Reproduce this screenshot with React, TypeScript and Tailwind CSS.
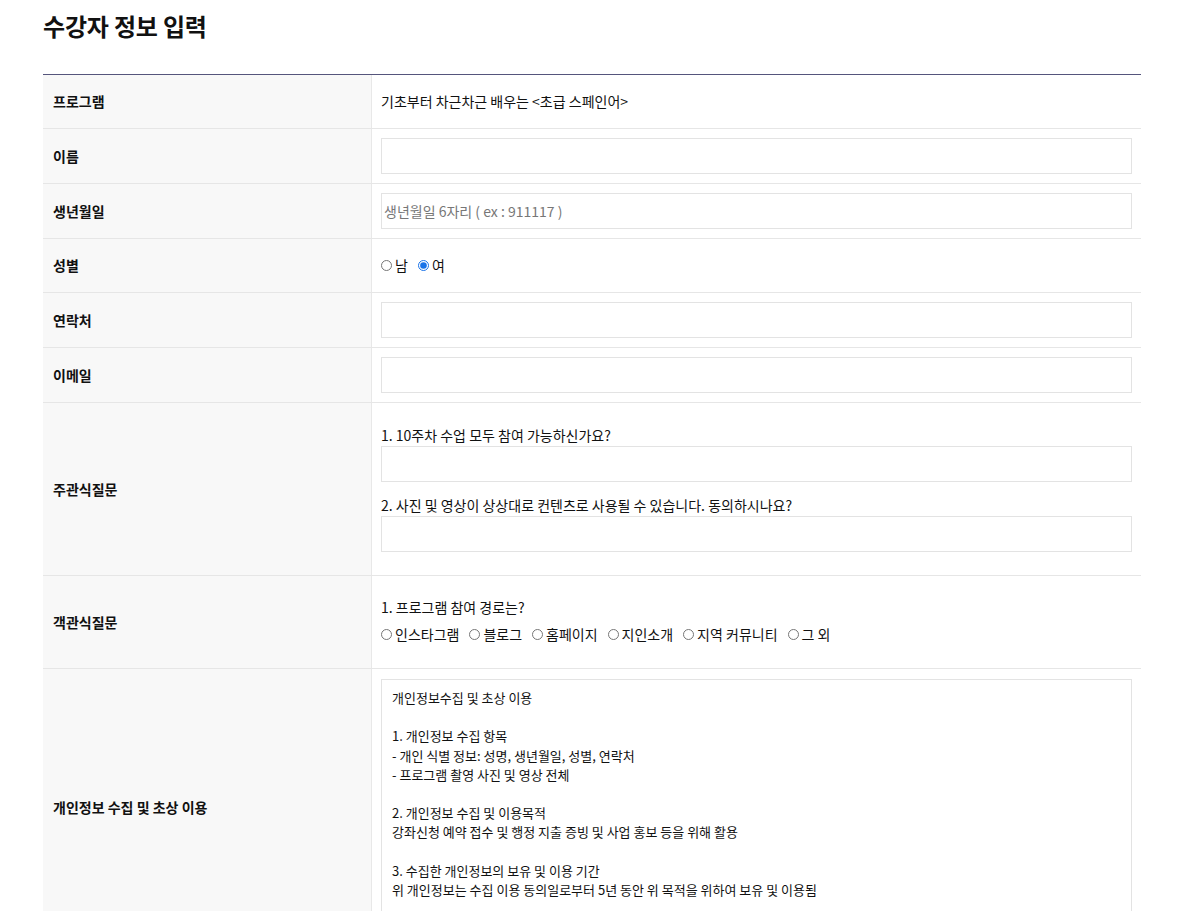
import React from 'react';

const font = { fontFamily: '"Malgun Gothic", "Noto Sans CJK KR", "Noto Sans", sans-serif' };

const Row: React.FC<{ label: string; children: React.ReactNode; className?: string }> = ({
  label,
  children,
  className = '',
}) => (
  <div className="flex border-b border-[#e6e6e6]">
    <div className="w-[328px] shrink-0 bg-[#f8f8f8] pl-[10px] flex items-center text-[14px] font-bold text-[#111]">
      {label}
    </div>
    <div className={`flex-1 border-l border-[#e8e8e8] px-[9px] ${className}`}>{children}</div>
  </div>
);

const TextInput: React.FC<{ placeholder?: string }> = ({ placeholder }) => (
  <input
    type="text"
    placeholder={placeholder}
    className="block w-full h-[36px] border border-[#e3e3e3] bg-white px-[2px] text-[14px] text-[#111] placeholder:text-[#777] outline-none"
  />
);

const Radio: React.FC<{ name: string; label: string; checked?: boolean }> = ({ name, label, checked }) => (
  <label className="flex items-center mr-[10px]">
    <input
      type="radio"
      name={name}
      defaultChecked={checked}
      className="w-[11px] h-[11px] m-0 mr-[3px] accent-[#1a73e8]"
    />
    <span>{label}</span>
  </label>
);

const consent = `개인정보수집 및 초상 이용

1. 개인정보 수집 항목
- 개인 식별 정보: 성명, 생년월일, 성별, 연락처
- 프로그램 촬영 사진 및 영상 전체

2. 개인정보 수집 및 이용목적
강좌신청 예약 접수 및 행정 지출 증빙 및 사업 홍보 등을 위해 활용

3. 수집한 개인정보의 보유 및 이용 기간
위 개인정보는 수집 이용 동의일로부터 5년 동안 위 목적을 위하여 보유 및 이용됨`;

export default function App() {
  return (
    <div className="min-h-screen bg-white text-[#111]" style={font}>
      <div className="mx-[43px] w-[1098px]">
        <h1 className="pt-[10px] text-[24px] font-bold leading-[32px] tracking-[-0.2px]">수강자 정보 입력</h1>

        <div className="mt-[32px] border-t border-[#55557c]">
          <Row label="프로그램" className="flex items-center h-[53px] text-[14px]">
            기초부터 차근차근 배우는 &lt;초급 스페인어&gt;
          </Row>
          <Row label="이름" className="py-[9px]">
            <TextInput />
          </Row>
          <Row label="생년월일" className="py-[9px]">
            <TextInput placeholder="생년월일 6자리 ( ex : 911117 )" />
          </Row>
          <Row label="성별" className="flex items-center h-[53px] text-[14px]">
            <Radio name="gender" label="남" />
            <Radio name="gender" label="여" checked />
          </Row>
          <Row label="연락처" className="py-[9px]">
            <TextInput />
          </Row>
          <Row label="이메일" className="py-[9px]">
            <TextInput />
          </Row>
          <Row label="주관식질문" className="pt-[22px] pb-[23px] text-[14px]">
            <div className="leading-[21px]">1. 10주차 수업 모두 참여 가능하신가요?</div>
            <TextInput />
            <div className="mt-[13px] leading-[21px]">2. 사진 및 영상이 상상대로 컨텐츠로 사용될 수 있습니다. 동의하시나요?</div>
            <TextInput />
          </Row>
          <Row label="객관식질문" className="pt-[21px] pb-[23px] text-[14px]">
            <div className="leading-[21px]">1. 프로그램 참여 경로는?</div>
            <div className="mt-[6px] flex items-center leading-[21px]">
              <Radio name="route" label="인스타그램" />
              <Radio name="route" label="블로그" />
              <Radio name="route" label="홈페이지" />
              <Radio name="route" label="지인소개" />
              <Radio name="route" label="지역 커뮤니티" />
              <Radio name="route" label="그 외" />
            </div>
          </Row>
          <Row label="개인정보 수집 및 초상 이용" className="py-[10px]">
            <textarea
              readOnly
              defaultValue={consent}
              className="block w-full h-[256px] resize-none border border-[#e3e3e3] px-[10px] py-[8px] text-[13px] leading-[19.2px] text-[#111] outline-none"
            />
          </Row>
        </div>
      </div>
    </div>
  );
}
